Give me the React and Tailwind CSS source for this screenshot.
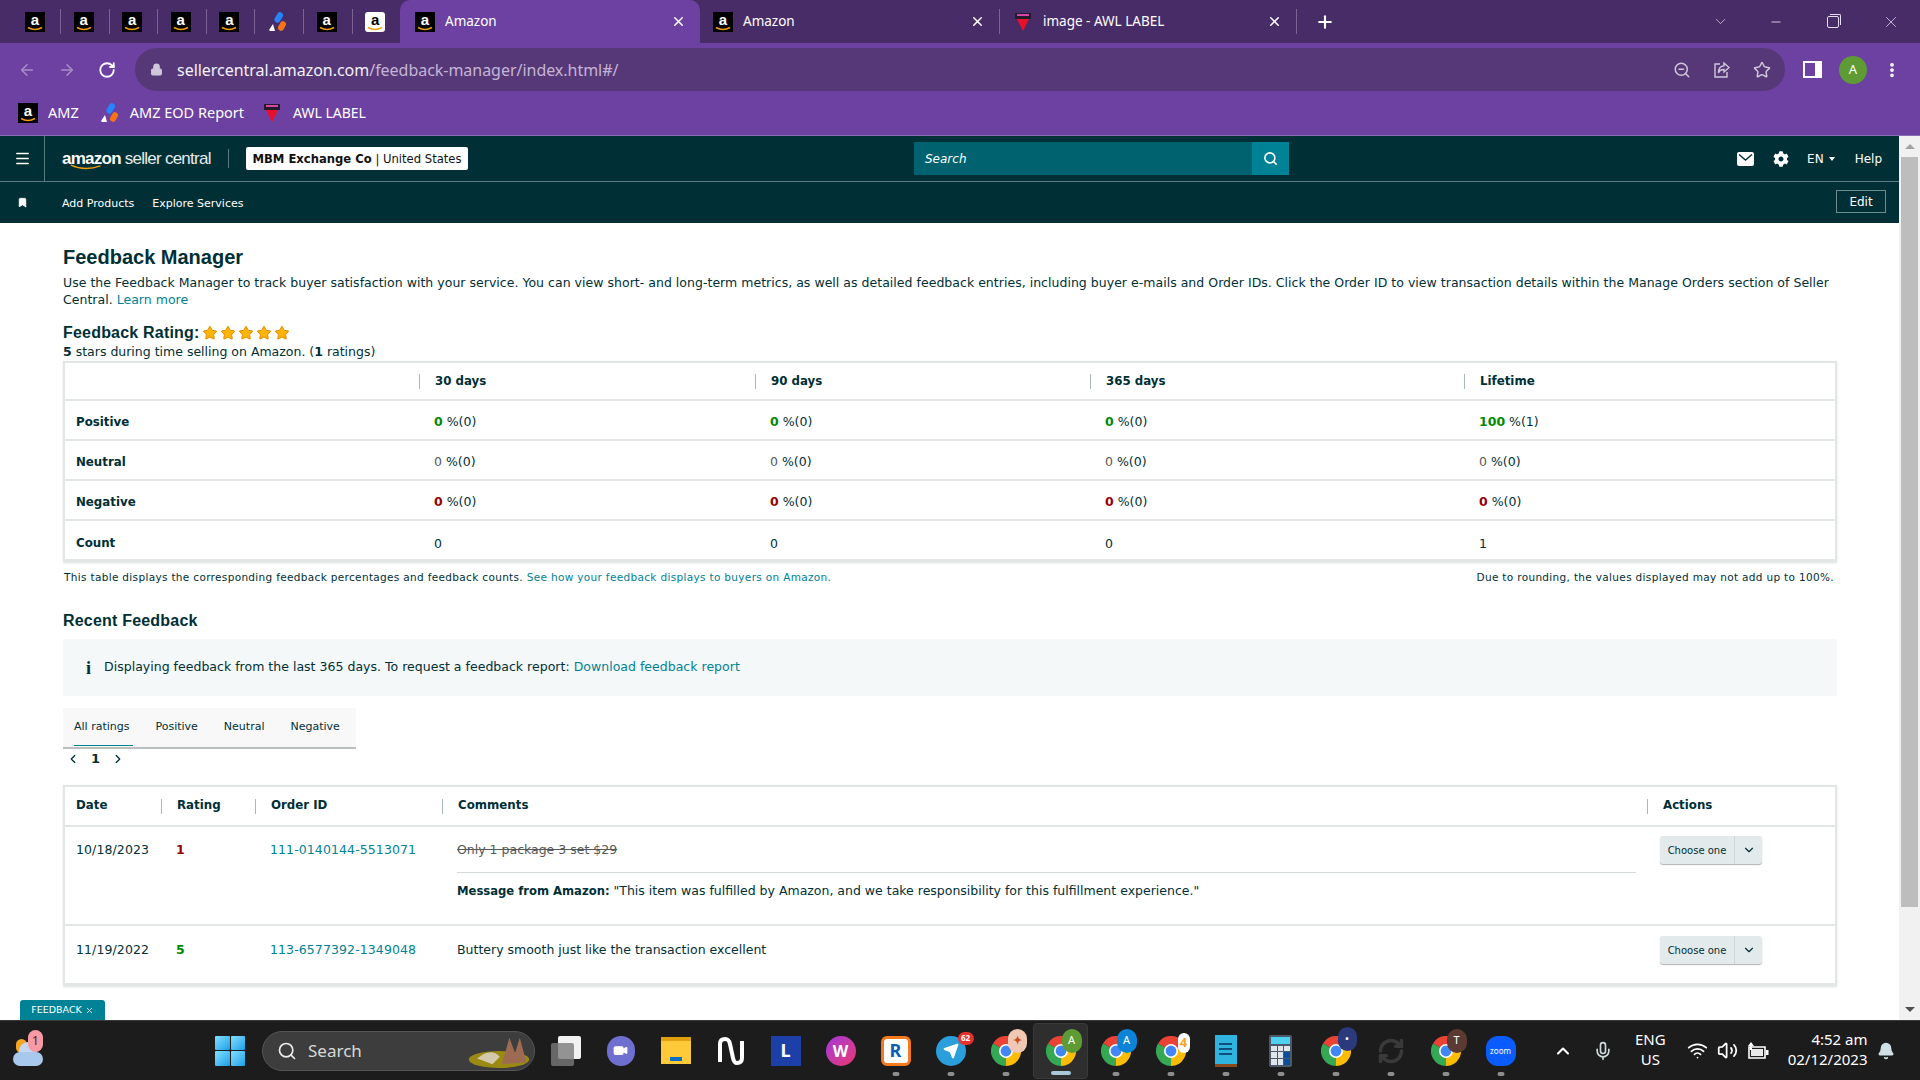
import React from 'react';
import {
  ArrowLeft, ArrowRight, RotateCw, Lock, ZoomOut, Star, EllipsisVertical, X, Plus, ChevronDown, ChevronUp,
  Minus, Menu, Bookmark, Search, ChevronLeft, ChevronRight, Mic, Wifi, Volume2,
  Bell, RefreshCw, Video, Send,
} from 'lucide-react';
import { FaCog } from 'react-icons/fa';

const SANS = "font-['Noto_Sans','Liberation_Sans',sans-serif]";
const BODY = "font-['DejaVu_Sans','Liberation_Sans',sans-serif]";
const HEAD = "font-['Liberation_Sans',sans-serif]";

const AmazonIcon = ({ round }) => (
  <div className={`relative shrink-0 w-5 h-5 flex items-start justify-center overflow-hidden ${round ? 'bg-white rounded-[3px] text-black' : 'bg-black text-white'}`}>
    <span className="text-[15px] font-bold leading-[15px] font-['Liberation_Sans',sans-serif]">a</span>
    <svg viewBox="0 0 20 20" className="absolute inset-0 w-5 h-5">
      <path d="M3 15.5 Q10 19.5 17 15.5" fill="none" stroke="#f59e0b" strokeWidth="1.6" />
    </svg>
  </div>
);

const JiraIcon = () => (
  <svg viewBox="0 0 20 20" className="w-5 h-5 shrink-0">
    <rect x="8" y="0" width="6" height="11" rx="3" transform="rotate(30 11 5)" fill="#2684ff" />
    <rect x="11" y="9" width="6" height="10" rx="3" transform="rotate(30 14 14)" fill="#f97316" />
    <path d="M1 18 L5 12 L7 19 L2 19 Z" fill="#fff" />
  </svg>
);

const AwlIcon = () => (
  <svg viewBox="0 0 20 20" className="w-5 h-5 shrink-0">
    <rect x="2" y="1" width="16" height="6" fill="#231a2b" />
    <rect x="4" y="2" width="12" height="2" fill="#d946a8" />
    <path d="M4 7 L16 7 L10 19 Z" fill="#e8102a" />
  </svg>
);

const ChromeIcon = () => (
  <svg viewBox="0 0 30 30" className="w-[30px] h-[30px]">
    <path d="M15 15 L2 7.5 A15 15 0 0 1 28 7.5 Z" fill="#ea4335" />
    <path d="M15 15 L28 7.5 A15 15 0 0 1 15 30 Z" fill="#fbbc04" />
    <path d="M15 15 L15 30 A15 15 0 0 1 2 7.5 Z" fill="#34a853" />
    <circle cx="15" cy="15" r="7" fill="#fff" />
    <circle cx="15" cy="15" r="5.4" fill="#4285f4" />
  </svg>
);

// pinned tab icons in the strip
const pinned = ['a', 'a', 'a', 'a', 'a', 'j', 'a', 'w'];

const TabStrip = () => (
  <div className="h-[43px] bg-[#482c68] flex items-center text-white shrink-0">
    <div className="flex items-center w-[400px] shrink-0 pl-[25px]">
      {pinned.map((p, i) => (
        <div key={i} className={`flex items-center h-[25px] shrink-0 ${i < 7 ? 'w-[48.6px]' : 'w-5'}`}>
          {p === 'j' ? <JiraIcon /> : <AmazonIcon round={p === 'w'} />}
          {i < 7 && <div className="ml-[15px] h-[25px] border-l border-[#7b6394]" />}
        </div>
      ))}
    </div>
    <div className="w-[300px] h-[43px] bg-[#6c41a1] rounded-t-[10px] flex items-center pl-[15px] pr-[14px]">
      <AmazonIcon />
      <span className={`ml-[10px] flex-1 text-[13.5px] ${SANS}`}>Amazon</span>
      <X size={15} strokeWidth={2.5} />
    </div>
    <div className="w-[300px] h-[25px] flex items-center pl-[13px] pr-[14px] border-r border-[#7b6394]">
      <AmazonIcon />
      <span className={`ml-[10px] flex-1 text-[13.5px] ${SANS}`}>Amazon</span>
      <X size={15} strokeWidth={2.5} />
    </div>
    <div className="w-[297px] h-[25px] flex items-center pl-[13px] pr-[14px] border-r border-[#7b6394]">
      <AwlIcon />
      <span className={`ml-[10px] flex-1 text-[13.5px] ${SANS}`}>image - AWL LABEL</span>
      <X size={15} strokeWidth={2.5} />
    </div>
    <Plus size={20} strokeWidth={2.5} className="ml-[18px]" />
    <div className="flex-1" />
    <div className="flex items-center text-[#e6def0]">
      <ChevronDown size={17} strokeWidth={1} className="mr-[40px]" />
      <Minus size={14} strokeWidth={1.5} className="mr-[44px]" />
      <div className="relative w-[12px] h-[12px] border border-[#e6def0] rounded-[2px] mr-[43px]">
        <div className="absolute right-[-3px] top-[-3px] w-[11px] h-[11px] border-t border-r border-[#e6def0] rounded-tr-[2px]" />
      </div>
      <X size={18} strokeWidth={1} className="mr-[20px]" />
    </div>
  </div>
);

const Toolbar = () => (
  <div className="h-[50px] bg-[#6c41a1] flex items-start shrink-0 text-white">
    <div className="flex items-center h-[48px] pt-[5px] w-[135px] pl-[18px] gap-[22px]">
      <ArrowLeft size={18} className="text-[#a78fc8]" />
      <ArrowRight size={18} className="text-[#a78fc8]" />
      <RotateCw size={18} strokeWidth={2.4} />
    </div>
    <div className="mt-[5px] w-[1650px] h-[43px] rounded-full bg-[#563878] flex items-center pl-[15px] pr-[14px]">
      <Lock size={13} fill="#cfc6da" className="text-[#cfc6da]" />
      <span className={`ml-[14px] text-[16px] text-[#f4f0f8] tracking-[-0.03px] ${SANS}`}>
        sellercentral.amazon.com<span className="text-[#c4b5d6]">/feedback-manager/index.html#/</span>
      </span>
      <div className="flex-1" />
      <ZoomOut size={18} className="text-[#cfc6da] mr-[22px]" />
      <svg viewBox="0 0 18 18" className="w-[18px] h-[18px] mr-[22px]" fill="none" stroke="#cfc6da" strokeWidth="1.4">
        <path d="M7 3 H2 V16 H14 V11" />
        <path d="M11 2 L16 6.5 L11 11 V8.5 Q6.5 8.5 5.5 12 Q5.5 5 11 4.7 Z" />
      </svg>
      <Star size={18} className="text-[#cfc6da]" />
    </div>
    <div className="flex items-center h-[48px] pt-[5px] pl-[18px]">
      <div className="w-[19px] h-[17px] border-[2px] border-white border-r-[7px]" />
      <div className="ml-[17px] w-[28px] h-[28px] rounded-full bg-[#5e9b34] flex items-center justify-center text-[13px]">A</div>
      <EllipsisVertical size={18} strokeWidth={3} className="ml-[16px]" />
    </div>
  </div>
);

const Bookmarks = () => (
  <div className={`h-[42px] bg-[#6c41a1] flex items-center pl-[18px] pb-[3px] text-white text-[14.5px] shrink-0 ${SANS}`}>
    <AmazonIcon />
    <span className="ml-[10px]">AMZ</span>
    <div className="ml-[21px]"><JiraIcon /></div>
    <span className="ml-[10px]">AMZ EOD Report</span>
    <div className="ml-[18px]"><AwlIcon /></div>
    <span className="ml-[11px] text-[14px]">AWL LABEL</span>
  </div>
);

const SellerHeader = () => (
  <div className={`bg-[#002f36] shrink-0 text-white ${BODY}`}>
    <div className="h-[46px] flex items-center border-b border-[#5b7b80] relative">
      <div className="w-[45px] h-full flex items-center justify-center border-r border-[#5b7b80]">
        <Menu size={17} strokeWidth={2.2} />
      </div>
      <div className={`ml-[17px] w-[150px] relative whitespace-nowrap ${HEAD}`}>
        <span className="text-[17px] leading-none tracking-[-0.75px]">
          <b>amazon</b> <span className="text-[#e4ecec]">seller central</span>
        </span>
        <svg viewBox="0 0 40 8" className="absolute left-[8px] top-[17px] w-[32px] h-[7px]">
          <path d="M1 1 Q18 9 38 2" fill="none" stroke="#f59e0b" strokeWidth="1.8" />
        </svg>
      </div>
      <div className="ml-[16px] h-[19px] border-l border-[#5b7b80]" />
      <div className="ml-[17px] w-[222px] h-[23px] pt-[2px] bg-white rounded-[2px] text-[#111] text-[11.6px] flex items-center justify-center whitespace-nowrap">
        <b>MBM Exchange Co</b>&nbsp;| United States
      </div>
      <div className="ml-[446px] w-[375px] h-[33px] flex">
        <div className="flex-1 bg-[#00626f] flex items-center pl-[11px] text-[12px] italic">Search</div>
        <div className="w-[37px] bg-[#008296] flex items-center justify-center"><Search size={15} strokeWidth={2.5} /></div>
      </div>
      <div className="flex-1" />
      <svg viewBox="0 0 17 14" className="w-[17px] h-[14px] mr-[19px]">
        <rect width="17" height="14" rx="2" fill="#fff" />
        <path d="M2 2.5 L8.5 8 L15 2.5" fill="none" stroke="#002f36" strokeWidth="1.4" />
      </svg>
      <FaCog size={16} className="mr-[18px]" />
      <span className="text-[12px]">EN</span>
      <span className="ml-[5px] w-0 h-0 border-x-[3.5px] border-x-transparent border-t-[4px] border-t-white" />
      <span className="ml-[20px] mr-[17px] text-[12px]">Help</span>
    </div>
    <div className="h-[41px] flex items-center text-[11px]">
      <Bookmark size={11} fill="#fff" className="ml-[17px]" />
      <span className="ml-[34px] pt-[3px]">Add Products</span>
      <span className="ml-[18px] pt-[3px]">Explore Services</span>
      <div className="flex-1" />
      <div className="mr-[13px] mb-[2px] w-[50px] h-[23px] border border-[#6d8a8e] flex items-center justify-center text-[12px]">Edit</div>
    </div>
  </div>
);

const Zero = ({ color, value = 0, pct = 0 }) => (
  <span>
    <b className={color}>{value}</b> %({pct})
  </span>
);

const rows = [
  ['Positive', 'text-[#008a00]', [[0, 0], [0, 0], [0, 0], [100, 1]]],
  ['Neutral', 'text-[#565959] font-normal', [[0, 0], [0, 0], [0, 0], [0, 0]]],
  ['Negative', 'text-[#990000]', [[0, 0], [0, 0], [0, 0], [0, 0]]],
];

const GRID = 'grid grid-cols-[354px_336px_335px_374px_1fr]';

const RatingTable = () => (
  <div className="border-2 border-[#e3e6e6] border-b-[3px] shadow-[0_1px_2px_rgba(0,0,0,0.12)] text-[12.5px]">
    <div className={`${GRID} h-[38px] items-center font-bold text-[11.8px] border-b-2 border-[#e3e6e6]`}>
      <div />
      {['30 days', '90 days', '365 days', 'Lifetime'].map((h) => (
        <div key={h} className="h-[15px] pt-[1px] flex items-center border-l border-[#aab7b8] pl-[15px]">{h}</div>
      ))}
    </div>
    {rows.map(([label, color, vals]) => (
      <div key={label} className={`${GRID} h-[40px] pt-[5px] items-center border-b-2 border-[#e3e6e6]`}>
        <b className="pl-[11px] text-[11.8px]">{label}</b>
        {vals.map(([v, c], i) => (
          <div key={i} className="pl-[15px]"><Zero color={color} value={v} pct={c} /></div>
        ))}
      </div>
    ))}
    <div className={`${GRID} h-[38px] pt-[8px] items-center`}>
      <b className="pl-[11px] text-[11.8px]">Count</b>
      {[0, 0, 0, 1].map((v, i) => <div key={i} className="pl-[15px]">{v}</div>)}
    </div>
  </div>
);

const ChooseOne = () => (
  <div className="w-[102px] h-[28px] ml-[13px] -mt-[2px] flex bg-[#e3eaec] rounded-[3px] shadow-[0_1px_1px_rgba(0,0,0,0.3)] text-[10px] items-center">
    <div className="w-[75px] h-full flex items-center justify-center border-r border-[#cfd8da]">Choose one</div>
    <div className="flex-1 flex items-center justify-center"><ChevronDown size={14} strokeWidth={2} /></div>
  </div>
);

const COLS = 'grid grid-cols-[96px_94px_187px_1205px_1fr]';

const FeedbackTable = () => (
  <div className="border-2 border-[#e3e6e6] border-b-[3px] shadow-[0_1px_2px_rgba(0,0,0,0.12)] text-[12.5px]">
    <div className={`${COLS} h-[40px] items-center font-bold text-[11.8px] border-b-2 border-[#e3e6e6]`}>
      <div className="pl-[11px]">Date</div>
      {['Rating', 'Order ID', 'Comments', 'Actions'].map((h) => (
        <div key={h} className="h-[15px] flex items-center border-l border-[#aab7b8] pl-[15px]">{h}</div>
      ))}
    </div>
    <div className={`${COLS} h-[99px] border-b-2 border-[#e3e6e6] pt-[11px]`}>
      <div className="pl-[11px] pt-[3px] tracking-[0.1px]">10/18/2023</div>
      <b className="pl-[15px] pt-[3px] text-[#990000]">1</b>
      <a className="pl-[15px] pt-[3px] text-[#008296] tracking-[0.1px]">111-0140144-5513071</a>
      <div className="pl-[15px] pr-[11px]">
        <div className="pt-[3px] h-[35px] border-b border-[#d5dbdb] line-through text-[#565959]">Only 1 package 3 set $29</div>
        <div className="pt-[9px]"><b className="text-[11.6px]">Message from Amazon:</b> "This item was fulfilled by Amazon, and we take responsibility for this fulfillment experience."</div>
      </div>
      <ChooseOne />
    </div>
    <div className={`${COLS} h-[57px] pt-[12px]`}>
      <div className="pl-[11px] pt-[3px] tracking-[0.1px]">11/19/2022</div>
      <b className="pl-[15px] pt-[3px] text-[#008a00]">5</b>
      <a className="pl-[15px] pt-[3px] text-[#008296] tracking-[0.1px]">113-6577392-1349048</a>
      <div className="pl-[15px] pt-[3px]">Buttery smooth just like the transaction excellent</div>
      <ChooseOne />
    </div>
  </div>
);

const Content = () => (
  <div className={`flex-1 pl-[63px] pr-[62px] pt-[21px] text-[#002f36] ${BODY}`}>
    <h1 className={`text-[20px] font-bold leading-[26px] ${HEAD}`}>Feedback Manager</h1>
    <p className="mt-[4px] text-[12.5px] leading-[17px] tracking-[0.025px]">
      Use the Feedback Manager to track buyer satisfaction with your service. You can view short- and long-term metrics, as well as detailed feedback entries, including buyer e-mails and Order IDs. Click the Order ID to view transaction details within the Manage Orders section of Seller Central. <a className="text-[#008296]">Learn more</a>
    </p>
    <div className="mt-[15px] h-[20px] flex items-center">
      <span className={`text-[16px] font-bold tracking-[0.2px] ${HEAD}`}>Feedback Rating:</span>
      <span className="ml-[2px] flex gap-[2px]">
        {[0, 1, 2, 3, 4].map((i) => <Star key={i} size={16} fill="#ffb400" strokeWidth={1.5} className="text-[#e08a00]" />)}
      </span>
    </div>
    <p className="text-[12.5px] leading-[17px] mb-[1px]"><b>5</b> stars during time selling on Amazon. (<b>1</b> ratings)</p>
    <RatingTable />
    <div className="mt-[8px] flex justify-between text-[10.5px] tracking-[0.33px] leading-[14px] px-[1px]">
      <span>This table displays the corresponding feedback percentages and feedback counts. <a className="text-[#008296]">See how your feedback displays to buyers on Amazon.</a></span>
      <span className="pr-[2px]">Due to rounding, the values displayed may not add up to 100%.</span>
    </div>
    <h2 className={`mt-[26px] text-[16px] font-bold leading-[22px] tracking-[0.2px] ${HEAD}`}>Recent Feedback</h2>
    <div className="mt-[7px] h-[57px] bg-[#f5f8f9] flex items-center pl-[23px] text-[12.5px]">
      <span className="font-bold text-[18px] font-['Liberation_Serif',serif] leading-none">i</span>
      <span className="ml-[13px] tracking-[0.02px]">Displaying feedback from the last 365 days. To request a feedback report: <a className="text-[#008296]">Download feedback report</a></span>
    </div>
    <div className="mt-[12px] w-[293px] h-[41px] bg-[#f8f8f8] border-b-2 border-[#bbbfbf] flex text-[11px] pl-[11px] gap-[26px] items-center">
      <span className="relative h-full flex items-center">All ratings<span className="absolute left-0 right-[-4px] bottom-[1px] h-[1px] bg-[#008296]" /></span>
      <span>Positive</span>
      <span>Neutral</span>
      <span>Negative</span>
    </div>
    <div className="h-[20px] flex items-center pl-[3px] text-[13px] font-bold">
      <ChevronLeft size={14} strokeWidth={2.2} />
      <span className="ml-[11px]">1</span>
      <ChevronRight size={14} strokeWidth={2.2} className="ml-[11px]" />
    </div>
    <div className="mt-[16px]"><FeedbackTable /></div>
  </div>
);

const Page = () => (
  <div className="flex-1 min-h-0 flex relative overflow-hidden bg-white border-t border-[#8a6bb8]">
    <div className="flex-1 min-w-0 flex flex-col">
      <SellerHeader />
      <Content />
    </div>
    <div className="w-[21px] bg-[#f1f1f1] flex flex-col items-center shrink-0">
      <div className="h-[21px] flex items-center"><div className="w-0 h-0 border-x-[5px] border-x-transparent border-b-[5px] border-b-[#a3a3a3]" /></div>
      <div className="w-[17px] h-[750px] bg-[#bdbdbd]" />
      <div className="flex-1" />
      <div className="h-[21px] flex items-center"><div className="w-0 h-0 border-x-[5px] border-x-transparent border-t-[5px] border-t-[#505050]" /></div>
    </div>
    <div className={`absolute left-[20px] bottom-0 w-[85px] h-[20px] bg-[#008296] rounded-t-[3px] text-white text-[9.5px] flex items-center justify-center gap-[3px] ${BODY}`}>
      FEEDBACK <X size={9} strokeWidth={2} />
    </div>
  </div>
);

const Slot = ({ children, dot, active }) => (
  <div className={`relative w-[55px] h-[56px] flex items-center justify-center rounded-[4px] ${active ? 'bg-[#2e2e2e] border border-[#3a3a3a]' : ''}`}>
    {children}
    {dot && <span className={`absolute bottom-[3px] left-1/2 -translate-x-1/2 h-[4px] rounded-full ${active ? 'w-[20px] bg-[#a8c7d8]' : 'w-[7px] bg-[#8e8e8e]'}`} />}
  </div>
);

const Badge = ({ className, children }) => (
  <span className={`absolute rounded-full flex items-center justify-center text-white font-bold ${className}`}>{children}</span>
);

const Taskbar = () => (
  <div className={`h-[60px] bg-[#1c1c1c] border-t border-[#3a3a3a] flex items-center shrink-0 text-white ${SANS}`}>
    <div className="relative ml-[13px] w-[30px] h-[30px]">
      <div className="absolute left-[3px] top-[3px] w-[11px] h-[14px] bg-[#f5a623] rounded-full" />
      <div className="absolute left-[6px] bottom-[6px] w-[18px] h-[18px] rounded-full bg-[#c4d8f2]" />
      <div className="absolute left-0 bottom-0 w-[30px] h-[14px] rounded-full bg-[#a8c8ee]" />
      <Badge className="right-[0px] top-[-6px] w-[15px] h-[22px] bg-[#f79aa5] !text-[#5a1a20] text-[12px] font-normal">1</Badge>
    </div>
    <div className="ml-[172px] w-[30px] h-[30px] grid grid-cols-2 gap-[1px]">
      {[0, 1, 2, 3].map((i) => <div key={i} className="bg-gradient-to-br from-[#7fe0ff] to-[#0c9fe8] rounded-[1px]" />)}
    </div>
    <div className="ml-[17px] w-[273px] h-[40px] rounded-full bg-[#3d3d3d] border border-[#555] flex items-center pl-[14px] relative">
      <Search size={20} className="text-[#ececec]" />
      <span className="ml-[11px] text-[17px] text-[#d8d8d8]">Search</span>
      <svg viewBox="0 0 66 36" className="absolute right-[2px] top-[2px] w-[66px] h-[34px]">
        <ellipse cx="33" cy="27" rx="32" ry="9" fill="#9a8a12" />
        <path d="M36 32 L44 4 L50 20 L55 4 L62 30 Z" fill="#9c6b52" />
        <path d="M10 26 Q24 14 34 24 L26 32 Z" fill="#d4c9a8" />
      </svg>
    </div>
    <div className="ml-[3px] flex items-center">
      <Slot>
        <div className="relative w-[30px] h-[30px]">
          <div className="absolute right-0 top-0 w-[23px] h-[23px] bg-[#f2f2f2] rounded-[2px]" />
          <div className="absolute left-0 bottom-0 w-[23px] h-[23px] bg-[#7a7a7a]/80 rounded-[2px]" />
        </div>
      </Slot>
      <Slot>
        <div className="w-[28px] h-[30px] rounded-full bg-[#6f6fd0] flex items-center justify-center"><Video size={15} fill="#fff" className="text-white" /></div>
      </Slot>
      <Slot>
        <div className="relative w-[30px] h-[27px] bg-[#ffca3a] border-t-[4px] border-[#e0a010] flex items-end justify-center pb-[3px]"><div className="w-[12px] h-[4px] bg-[#0a6fc2]" /></div>
      </Slot>
      <Slot>
        <svg viewBox="0 0 30 30" className="w-[30px] h-[30px]"><path d="M4 26 V8 Q4 3 9 3 Q13 3 14 8 L17 22 Q18 27 21 27 Q26 27 26 22 V5" fill="none" stroke="#fff" strokeWidth="4" /></svg>
      </Slot>
      <Slot>
        <div className="w-[30px] h-[30px] bg-[#1c3fa8] flex items-center justify-center text-[18px] font-bold">L</div>
      </Slot>
      <Slot>
        <div className="w-[30px] h-[30px] rounded-full bg-gradient-to-br from-[#a22fd8] to-[#ee2d6e] flex items-center justify-center text-[16px] font-bold">W</div>
      </Slot>
      <Slot dot>
        <div className="w-[30px] h-[30px] rounded-[6px] bg-white border-[3px] border-[#f47a1f] flex items-center justify-center text-[#0a5fb4] text-[18px] font-bold">R</div>
      </Slot>
      <Slot dot>
        <div className="relative w-[30px] h-[30px] rounded-full bg-[#2a9fdc] flex items-center justify-center">
          <Send size={16} fill="#fff" className="text-white" />
          <Badge className="right-[-8px] top-[-4px] w-[16px] h-[13px] bg-[#e8312f] text-[8px]">62</Badge>
        </div>
      </Slot>
      <Slot dot>
        <div className="relative"><ChromeIcon /><Badge className="right-[-6px] top-[-7px] w-[19px] h-[24px] bg-[#f0c8b4] !text-[#c8501e] text-[11px]">✦</Badge></div>
      </Slot>
      <Slot dot active>
        <div className="relative"><ChromeIcon /><Badge className="right-[-6px] top-[-7px] w-[20px] h-[24px] bg-[#5e9b34] text-[11px] font-normal">A</Badge></div>
      </Slot>
      <Slot dot>
        <div className="relative"><ChromeIcon /><Badge className="right-[-6px] top-[-7px] w-[20px] h-[24px] bg-[#0b84d8] text-[11px] font-normal">A</Badge></div>
      </Slot>
      <Slot dot>
        <div className="relative"><ChromeIcon /><Badge className="right-[-4px] top-[-3px] w-[12px] h-[20px] bg-white !text-[#f5a623] text-[13px]">4</Badge></div>
      </Slot>
      <Slot dot>
        <div className="w-[22px] h-[32px] bg-[#2fb4e0] border-b-[3px] border-[#8a4a20] flex flex-col gap-[3px] items-center justify-center">
          {[0, 1, 2].map((i) => <div key={i} className="w-[13px] h-[2px] bg-[#0b4f7a]" />)}
        </div>
      </Slot>
      <Slot dot>
        <div className="w-[23px] h-[32px] bg-[#4a5a6a] rounded-[2px] p-[2px] flex flex-col gap-[2px]">
          <div className="h-[7px] bg-[#4fd2f0]" />
          <div className="flex-1 grid grid-cols-3 gap-[1px]">
            {[0, 1, 2, 3, 4, 5, 6, 7, 8].map((i) => <div key={i} className={i === 5 || i === 8 ? 'bg-[#0b4f9a]' : 'bg-[#dfe5ea]'} />)}
          </div>
        </div>
      </Slot>
      <Slot dot>
        <div className="relative"><ChromeIcon /><Badge className="right-[-6px] top-[-9px] w-[19px] h-[24px] bg-[#2a3a7a] text-[9px]">•</Badge></div>
      </Slot>
      <Slot dot>
        <RefreshCw size={28} strokeWidth={3} className="text-[#3a3a3a]" />
      </Slot>
      <Slot dot>
        <div className="relative"><ChromeIcon /><Badge className="right-[-6px] top-[-7px] w-[20px] h-[24px] bg-[#5a3a32] text-[11px] font-normal">T</Badge></div>
      </Slot>
      <Slot dot>
        <div className="w-[30px] h-[30px] rounded-[12px] bg-[#0b5cff] flex items-center justify-center text-[8px]">zoom</div>
      </Slot>
    </div>
    <ChevronUp size={20} strokeWidth={2.5} className="ml-[25px]" />
    <Mic size={20} className="ml-[20px] text-[#cfdadd]" />
    <div className="ml-[22px] pb-[3px] text-[15px] leading-[20px] text-center">ENG<br />US</div>
    <Wifi size={21} className="ml-[21px]" />
    <Volume2 size={21} className="ml-[9px]" />
    <svg viewBox="0 0 22 18" className="ml-[9px] w-[22px] h-[18px]">
      <path d="M2 5 H18 V16 H2 Z" fill="none" stroke="#fff" strokeWidth="1.6" />
      <rect x="4" y="7" width="12" height="7" fill="#e8e8e8" />
      <rect x="19" y="8" width="2.5" height="5" fill="#fff" />
      <path d="M4 0 L1 4 H3 V8 H5 V4 H7 Z" fill="#fff" />
    </svg>
    <div className="ml-[19px] pb-[3px] text-[15px] leading-[20px] text-right">4:52 am<br />02/12/2023</div>
    <Bell size={18} fill="#cfe0e6" className="ml-[10px] text-[#cfe0e6]" />
  </div>
);

export default function App() {
  return (
    <div className="w-[1920px] h-[1080px] flex flex-col overflow-hidden">
      <TabStrip />
      <Toolbar />
      <Bookmarks />
      <Page />
      <Taskbar />
    </div>
  );
}
